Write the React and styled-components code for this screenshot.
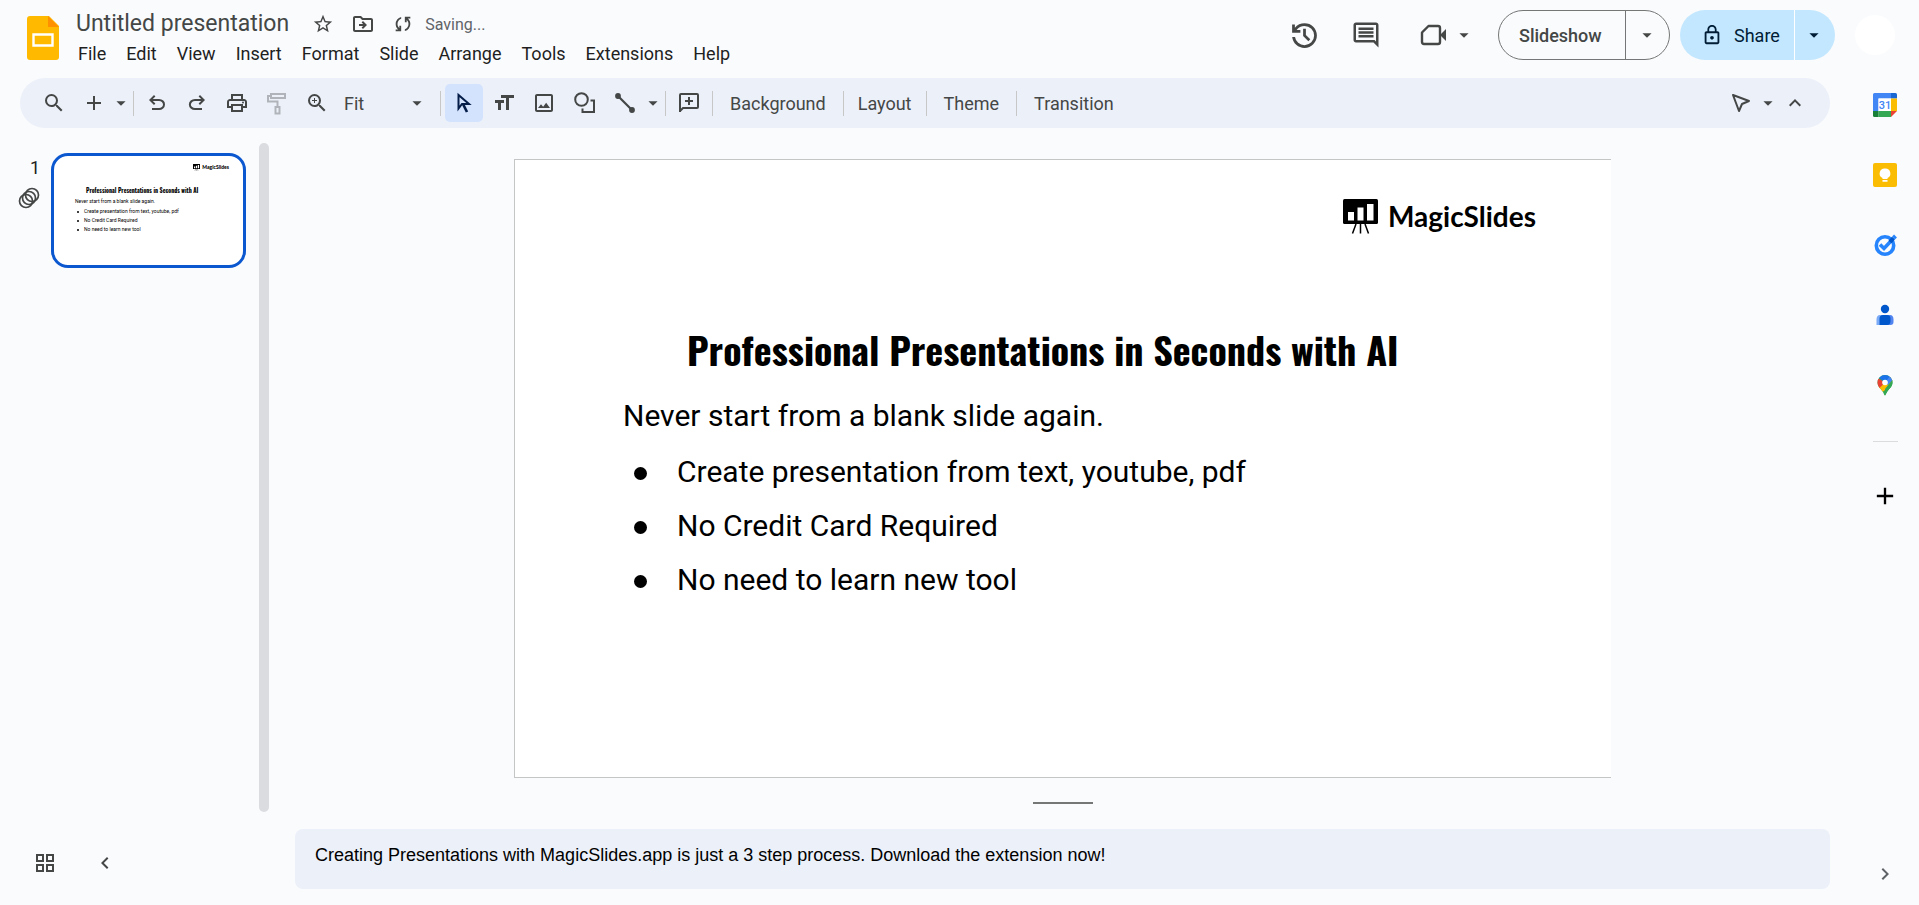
import styled, { createGlobalStyle } from "styled-components"
import {
  MdAdd,
  MdArrowDropDown,
  MdChevronLeft,
  MdChevronRight,
  MdFormatSize,
  MdKeyboardArrowUp,
  MdLockOutline,
  MdOutlineComment,
  MdOutlineDriveFileMove,
  MdOutlineGridView,
  MdOutlineImage,
  MdOutlinePrint,
  MdSearch,
  MdStarBorder,
  MdZoomIn,
} from "react-icons/md"

const GlobalStyle = createGlobalStyle`
    * {
        box-sizing: border-box;
    }
    body {
        margin: 0;
        background-color: #fafbfd;
        color: #1f1f1f;
        font-family: Roboto, "Liberation Sans", sans-serif;
    }
    button, select, textarea {
        font-family: inherit;
        color: inherit;
    }
    button {
        border: none;
        padding: 0;
        background: none;
        cursor: pointer;
    }
    svg {
        display: block;
        flex-shrink: 0;
    }
`

const Page = styled.div`
    display: flex;
    flex-direction: column;
    min-height: 100vh;
`

/* header */
const Header = styled.header`
    display: flex;
    justify-content: space-between;
    height: 78px;
    padding: 10px 24px 0 27px;
`
const HeaderLeft = styled.div`
    display: flex;
    gap: 9px;
`
const LogoLink = styled.a`
    padding-top: 6px;
`
const Titles = styled.div`
    display: flex;
    flex-direction: column;
`
const TitleRow = styled.div`
    display: flex;
    align-items: center;
    gap: 16px;
    height: 28px;
    padding-left: 8px;
    color: #444746;
`
const DocTitle = styled.h1`
    margin: 0 6px 0 0;
    font-size: 23px;
    font-weight: 400;
    line-height: 28px;
`
const SmallButton = styled.button`
    width: 24px;
    height: 24px;
    display: flex;
    align-items: center;
    justify-content: center;
`
const Status = styled.span`
    margin-left: -6px;
    font-size: 16px;
    color: #5f6368;
`
const Menu = styled.nav`
    display: flex;
    height: 30px;
`
const MenuItem = styled.button`
    padding: 0 10px;
    font-size: 18px;
    white-space: nowrap;
`
const HeaderRight = styled.div`
    display: flex;
    align-items: center;
    height: 50px;
    color: #444746;
`
const HeaderButton = styled.button`
    display: flex;
    align-items: center;
    justify-content: center;
    width: 61px;
    height: 50px;
`
const MeetButton = styled(HeaderButton)`
    width: 74px;
    margin: 0 14px;
    gap: 5px;
`
const Split = styled.div`
    display: flex;
    height: 50px;
    margin-right: 10px;
    overflow: hidden;
    border-radius: 25px;
    border: ${(props) => (props.$filled ? "none" : "1px solid #747775")};
    background-color: ${(props) => (props.$filled ? "#c2e7ff" : "transparent")};
    color: ${(props) => (props.$filled ? "#001d35" : "#444746")};
`
const SplitMain = styled.button`
    display: flex;
    align-items: center;
    gap: 11px;
    width: ${(props) => (props.$filled ? "114px" : "126px")};
    padding-left: ${(props) => (props.$filled ? "21px" : "20px")};
    font-size: 18px;
    font-weight: ${(props) => (props.$filled ? 400 : 500)};
`
const SplitArrow = styled.button`
    display: flex;
    align-items: center;
    justify-content: center;
    width: ${(props) => (props.$filled ? "41px" : "44px")};
    padding-right: 2px;
    border-left: 1px solid ${(props) => (props.$filled ? "#fff" : "#747775")};
`
const Avatar = styled.div`
    width: 40px;
    height: 40px;
    margin-left: 10px;
    border-radius: 50%;
    background-color: #fff;
`

/* body under the header */
const Body = styled.div`
    display: flex;
    flex: 1;
`
const Main = styled.main`
    display: flex;
    flex-direction: column;
    flex: 1;
    min-width: 0;
`
const Toolbar = styled.div`
    display: flex;
    align-items: center;
    height: 50px;
    margin: 0 21px 0 20px;
    padding: 0 16px 0 15px;
    border-radius: 25px;
    background-color: #ecf0f9;
    color: #444746;
`
const Tools = styled.div`
    display: flex;
    gap: 2px;
`
const ToolButton = styled.button`
    display: flex;
    align-items: center;
    justify-content: center;
    width: 38px;
    height: 38px;
    border-radius: 5px;
    color: ${(props) => (props.$active ? "#041e49" : "inherit")};
    background-color: ${(props) => (props.$active ? "#d3e3fd" : "transparent")};
    opacity: ${(props) => (props.disabled ? 0.35 : 1)};
`
const CaretButton = styled.button`
    display: flex;
    align-items: center;
    justify-content: center;
    width: 16px;
    height: 38px;
`
const Divider = styled.span`
    width: 1px;
    height: 25px;
    margin: 0 4px;
    background-color: #c7c7c7;
`
const ZoomBox = styled.label`
    display: flex;
    align-items: center;
    width: 98px;
    padding: 0 8px 0 6px;
`
const ZoomSelect = styled.select`
    flex: 1;
    appearance: none;
    border: none;
    padding: 0;
    background: none;
    font-size: 18px;
`
const TextButton = styled.button`
    height: 38px;
    padding: 0 ${(props) => (props.$tight ? "10px" : "13px")};
    font-size: 18px;
`
const Spacer = styled.div`
    flex: 1;
`

const Workspace = styled.div`
    display: flex;
    flex: 1;
`
const Filmstrip = styled.aside`
    display: flex;
    flex-direction: column;
    width: 295px;
    padding-top: 15px;
`
const FilmRow = styled.div`
    display: flex;
    flex: 1;
    justify-content: space-between;
    padding-right: 26px;
`
const FilmItem = styled.div`
    display: flex;
    padding-top: 10px;
`
const FilmInfo = styled.div`
    display: flex;
    flex-direction: column;
    align-items: flex-end;
    gap: 8px;
    width: 51px;
    padding: 4px 11px 0 0;
    font-size: 18px;
    line-height: 22px;
`
const Thumb = styled.button`
    display: flex;
    align-items: flex-start;
    width: 195px;
    height: 115px;
    border: 3px solid #0b57d0;
    border-radius: 17px;
    background-color: #fff;
    color: #000;
    overflow: hidden;
    text-align: left;
`
const ScrollThumb = styled.div`
    width: 10px;
    border-radius: 5px;
    background-color: #dadce0;
`
const FilmFooter = styled.div`
    display: flex;
    align-items: center;
    gap: 22px;
    height: 84px;
    margin-top: 9px;
    padding-left: 26px;
    color: #444746;
`

const Editor = styled.section`
    display: flex;
    flex-direction: column;
    flex: 1;
    padding: 31px 21px 16px 0;
`
const Stage = styled.div`
    display: flex;
    justify-content: center;
    flex: 1;
`
const Slide = styled.div`
    aspect-ratio: 1097 / 619;
    border: 1px solid #c4c6c5;
    border-right: none;
    background-color: #fff;
    color: #000;
`
const SlideInner = styled.div`
    display: flex;
    flex-direction: column;
    width: 100%;
    padding: ${(props) => (props.$mini ? "8px 14px 0 21px" : "39px 75px 0 108px")};
`
const Brand = styled.div`
    display: flex;
    align-self: flex-end;
    align-items: flex-start;
    gap: ${(props) => (props.$mini ? "2px" : "10px")};
    font-family: Lato, sans-serif;
    font-weight: ${(props) => (props.$mini ? 900 : 700)};
    font-size: ${(props) => (props.$mini ? "5px" : "28px")};
    line-height: ${(props) => (props.$mini ? "7px" : "34px")};
`
const Headline = styled.h2`
    margin: ${(props) => (props.$mini ? "15px 0 0 11px" : "91px 0 0 64px")};
    font-family: Oswald, "Roboto Condensed", "Liberation Sans Narrow", sans-serif;
    font-weight: 700;
    font-size: ${(props) => (props.$mini ? "6px" : "38px")};
    line-height: ${(props) => (props.$mini ? "10px" : "48px")};
    white-space: nowrap;
`
const Lead = styled.p`
    margin: ${(props) => (props.$mini ? "2px 0" : "16px 0 2px")};
    font-size: ${(props) => (props.$mini ? "5px" : "30px")};
    line-height: ${(props) => (props.$mini ? "7px" : "54px")};
`
const Bullets = styled.ul`
    margin: 0;
    padding: 0;
    list-style: none;
    font-size: ${(props) => (props.$mini ? "5px" : "30px")};
    line-height: ${(props) => (props.$mini ? "9px" : "54px")};
`
const Bullet = styled.li`
    display: flex;
    align-items: center;

    &::before {
        content: "";
        width: ${(props) => (props.$mini ? "2px" : "13px")};
        height: ${(props) => (props.$mini ? "2px" : "13px")};
        margin: ${(props) => (props.$mini ? "0 5px 0 2px" : "2px 30px 0 11px")};
        border-radius: 50%;
        background-color: #000;
    }
`
const ResizeHandle = styled.div`
    width: 60px;
    height: 2px;
    margin: 24px auto 25px;
    background-color: #747775;
`
const Notes = styled.textarea`
    display: block;
    width: 100%;
    height: 60px;
    padding: 15px 20px;
    border: none;
    border-radius: 8px;
    outline: none;
    resize: none;
    background-color: #ecf0f9;
    color: #000;
    font-family: "Liberation Sans", Arial, sans-serif;
    font-size: 18px;
    line-height: 23px;
`

/* right panel */
const SidePanel = styled.aside`
    display: flex;
    flex-direction: column;
    align-items: center;
    width: 68px;
    padding: 12px 0 19px;
`
const SideButton = styled.button`
    display: flex;
    align-items: center;
    justify-content: center;
    width: 30px;
    height: 30px;
    margin: 0 0 40px;
`
const SideLine = styled.span`
    width: 25px;
    height: 1px;
    margin: 1px 0 39px;
    background-color: #dadce0;
`
const PanelToggle = styled.button`
    color: #5f6368;
`

const Symbol = ({ d, size = 24 }) => (
  <svg width={size} height={size} viewBox="0 -960 960 960" fill="currentColor">
    <path d={d} />
  </svg>
)

const SYNC = "M160-160v-80h110l-16-14q-52-46-73-105t-21-119q0-111 66.5-197.5T400-790v84q-72 26-116 88.5T240-478q0 45 17 87.5t53 78.5l10 10v-98h80v240H160Zm400-10v-84q72-26 116-88.5T720-482q0-45-17-87.5T650-648l-10-10v98h-80v-240h240v80H690l16 14q49 49 71.5 106.5T800-482q0 111-66.5 197.5T560-170Z"
const UNDO = "M280-200v-80h284q63 0 109.5-40T720-420q0-60-46.5-100T564-560H312l104 104-56 56-200-200 200-200 56 56-104 104h252q97 0 169.5 63T800-420q0 94-72.5 157T564-200H280Z"
const REDO = "M396-200q-97 0-169.5-63T154-420q0-94 72.5-157T396-640h252L544-744l56-56 200 200-200 200-56-56 104-104H396q-63 0-109.5 40T234-420q0 60 52.5 100T396-280h284v80H396Z"
const HISTORY = "M480-120q-138 0-240.5-91.5T122-440h82q14 104 92.5 172T480-200q117 0 198.5-81.5T760-480q0-117-81.5-198.5T480-760q-69 0-129 32t-101 88h110v80H120v-240h80v94q51-64 124.5-99T480-840q75 0 140.5 28.5t114 77q48.5 48.5 77 114T840-480q0 75-28.5 140.5t-77 114q-48.5 48.5-114 77T480-120Zm112-192L440-464v-216h80v184l128 128-56 56Z"

const Caret = () => <MdArrowDropDown size={22} />

const SlidesLogo = () => (
  <svg width="32" height="44" viewBox="0 0 32 44">
    <path d="M3 0h19l10 10v31a3 3 0 0 1-3 3H3a3 3 0 0 1-3-3V3a3 3 0 0 1 3-3z" fill="#ffba00" />
    <path d="M21 0l11 11H21z" fill="#ff9100" />
    <path d="M6.5 18.5h19v11h-19z" fill="none" stroke="#fff" strokeWidth="2.4" />
  </svg>
)

const PaintRoller = () => (
  <svg width="24" height="24" viewBox="0 0 24 24" fill="none" stroke="currentColor" strokeWidth="2">
    <path d="M6 3h14v4H6zM6 5H3v5.5h9.5V16" />
    <path d="M10.5 16h4v6.5h-4z" />
  </svg>
)

const Cursor = () => (
  <svg width="24" height="26" viewBox="0 0 24 26" fill="none" stroke="currentColor" strokeWidth="2">
    <path d="M6.5 5v13.5l3.5-4.5h7z" />
    <path d="M11 14l4 8" strokeWidth="2.6" />
  </svg>
)

const Shapes = () => (
  <svg width="24" height="24" viewBox="0 0 24 24" fill="none" stroke="currentColor" strokeWidth="2">
    <circle cx="9.5" cy="8.5" r="6.3" />
    <path d="M18.5 9.5H22V21H10.5v-3.5" />
  </svg>
)

const Line = () => (
  <svg width="24" height="24" viewBox="0 0 24 24" stroke="currentColor" strokeWidth="2.2" fill="currentColor">
    <path d="M6 5l14 14" />
    <circle cx="6" cy="5" r="1.8" />
    <circle cx="20" cy="19" r="1.8" />
  </svg>
)

const AddComment = () => (
  <svg width="24" height="24" viewBox="0 0 24 24" fill="none" stroke="currentColor" strokeWidth="2">
    <path d="M3 21V4q0-1 1-1h16q1 0 1 1v12q0 1-1 1H6l-3 3z" />
    <path d="M12 6v8M8 10h8" />
  </svg>
)

const Meet = () => (
  <svg width="28" height="28" viewBox="0 0 28 28" fill="none" stroke="currentColor" strokeWidth="2.4">
    <path d="M8.5 5H18q2 0 2 2v14q0 2-2 2H4q-2 0-2-2v-9.5z" strokeLinejoin="round" />
    <path d="M20 14l6-6v12l-6-6z" fill="currentColor" stroke="none" />
  </svg>
)

const Pointer = () => (
  <svg width="24" height="24" viewBox="0 0 24 24" fill="none" stroke="currentColor" strokeWidth="2">
    <path d="M4 4l16 6-7 3-3 7z" strokeLinejoin="round" />
  </svg>
)

const Motion = () => (
  <svg width="22" height="22" viewBox="0 0 22 22" fill="none" stroke="#444746" strokeWidth="1.7">
    <circle cx="14" cy="8" r="6.5" />
    <circle cx="11" cy="11" r="6.5" />
    <circle cx="8" cy="14" r="6.5" />
  </svg>
)

const Easel = ({ width, height }) => (
  <svg width={width} height={height} viewBox="0 0 35 35">
    <rect width="35" height="25" rx="1.5" fill="#000" />
    <path d="M5 13h6v8.500H5zM14.500 8.500h6v13h-6zM24 5h6.500v16.500H24z" fill="#fff" />
    <path d="M13 25l-3.500 9.500M17.500 25v9.500M22 25l3.500 9.500" stroke="#000" strokeWidth="1.5" />
  </svg>
)

const Calendar = () => (
  <svg width="24" height="24" viewBox="0 0 24 24">
    <path d="M1.5 0H18v5.5H5.5V18H0V1.5Q0 0 1.5 0z" fill="#4285f4" />
    <path d="M18 0h4.5Q24 0 24 1.5V5.5h-6z" fill="#1967d2" />
    <path d="M18 5.5h6V18h-6z" fill="#fbbc04" />
    <path d="M5.5 18H18v6H5.5z" fill="#34a853" />
    <path d="M0 18h5.5v6h-4Q0 24 0 22.5z" fill="#188038" />
    <path d="M18 18h6l-6 6z" fill="#ea4335" />
    <path d="M5.5 5.5H18V18H5.5z" fill="#fff" />
    <text x="12" y="16" textAnchor="middle" fontSize="11" fontWeight="500" fill="#4285f4">31</text>
  </svg>
)

const Keep = () => (
  <svg width="24" height="24" viewBox="0 0 24 24">
    <rect width="24" height="24" rx="2" fill="#fbbc04" />
    <path d="M12 5.5a5 5 0 0 0-2.5 9.5v1h5v-1A5 5 0 0 0 12 5.5zM9.5 17h5v1.8h-5z" fill="#fff" />
  </svg>
)

const Tasks = () => (
  <svg width="24" height="24" viewBox="0 0 24 24" fill="none">
    <circle cx="12" cy="12.5" r="8.7" stroke="#2684fc" strokeWidth="3.6" />
    <path d="M7 11.5l4 4 7-7.5" stroke="#2684fc" strokeWidth="3.6" />
    <path d="M17 9l3.5-4" stroke="#0057cc" strokeWidth="4" />
    <path d="M20.5 5l2-2" stroke="#2684fc" strokeWidth="4" />
  </svg>
)

const Contacts = () => (
  <svg width="24" height="24" viewBox="0 0 24 24">
    <circle cx="12" cy="6" r="4.2" fill="#0057cc" />
    <path d="M7 12h4v10H3.5v-5.5Q3.5 12 7 12z" fill="#7baaf7" />
    <path d="M13 12h4q3.5 0 3.5 4.5V19q0 3-3 3H13z" fill="#5285f0" />
    <path d="M10 12h4q3.5 0 3.5 3.5V18q0 4-3.5 4H6.5v-6.5Q6.5 12 10 12z" fill="#0057cc" />
  </svg>
)

const Maps = () => (
  <svg width="24" height="24" viewBox="0 0 24 24">
    <clipPath id="pin">
      <path d="M12 2a7.5 7.5 0 0 0-7.5 7.5c0 4.5 4 6.5 6 10.5 .5 1.2 .8 2.5 1.5 2.5s1-1.3 1.5-2.5c2-4 6-6 6-10.5A7.5 7.5 0 0 0 12 2z" />
    </clipPath>
    <g clipPath="url(#pin)">
      <path d="M0 0h24v24H0z" fill="#34a853" />
      <path d="M12 9.5L18 2h2v6l-9 10-7 3V15z" fill="#fbbc04" />
      <path d="M3 4l9 5.5L5.5 16 3 12z" fill="#ea4335" />
      <path d="M12 9.5L5 4l4-4h8l3 6z" fill="#1a73e8" />
      <path d="M12 9.5L17 3l3 4-5 5z" fill="#4285f4" />
      <path d="M20 6v14h-8v-4z" fill="#34a853" />
    </g>
    <circle cx="12" cy="9.5" r="2.8" fill="#fff" />
  </svg>
)

const menus = ["File", "Edit", "View", "Insert", "Format", "Slide", "Arrange", "Tools", "Extensions", "Help"]

const points = ["Create presentation from text, youtube, pdf", "No Credit Card Required", "No need to learn new tool"]

const apps = [
  { name: "Calendar", icon: <Calendar /> },
  { name: "Keep", icon: <Keep /> },
  { name: "Tasks", icon: <Tasks /> },
  { name: "Contacts", icon: <Contacts /> },
  { name: "Maps", icon: <Maps /> },
]

const SlideContent = ({ mini }) => (
  <SlideInner $mini={mini}>
    <Brand $mini={mini}>
      <Easel width={mini ? 7 : 35} height={mini ? 7 : 35} />
      MagicSlides
    </Brand>
    <Headline $mini={mini}>Professional Presentations in Seconds with AI</Headline>
    <Lead $mini={mini}>Never start from a blank slide again.</Lead>
    <Bullets $mini={mini}>
      {points.map((point) => (
        <Bullet key={point} $mini={mini}>{point}</Bullet>
      ))}
    </Bullets>
  </SlideInner>
)

const App = () => {
  return (
    <Page>
      <GlobalStyle />
      <Header>
        <HeaderLeft>
          <LogoLink href="#" aria-label="Slides home">
            <SlidesLogo />
          </LogoLink>
          <Titles>
            <TitleRow>
              <DocTitle>Untitled presentation</DocTitle>
              <SmallButton aria-label="Star"><MdStarBorder size={22} /></SmallButton>
              <SmallButton aria-label="Move"><MdOutlineDriveFileMove size={24} /></SmallButton>
              <SmallButton aria-label="Sync status"><Symbol d={SYNC} size={22} /></SmallButton>
              <Status>Saving...</Status>
            </TitleRow>
            <Menu>
              {menus.map((name) => (
                <MenuItem key={name}>{name}</MenuItem>
              ))}
            </Menu>
          </Titles>
        </HeaderLeft>
        <HeaderRight>
          <HeaderButton aria-label="Version history"><Symbol d={HISTORY} size={33} /></HeaderButton>
          <HeaderButton aria-label="Comments"><MdOutlineComment size={30} /></HeaderButton>
          <MeetButton aria-label="Join a call"><Meet /><Caret /></MeetButton>
          <Split>
            <SplitMain>Slideshow</SplitMain>
            <SplitArrow aria-label="Slideshow options"><Caret /></SplitArrow>
          </Split>
          <Split $filled>
            <SplitMain $filled><MdLockOutline size={22} />Share</SplitMain>
            <SplitArrow $filled aria-label="Share options"><Caret /></SplitArrow>
          </Split>
          <Avatar />
        </HeaderRight>
      </Header>
      <Body>
        <Main>
          <Toolbar>
            <Tools>
              <ToolButton aria-label="Search"><MdSearch size={24} /></ToolButton>
              <ToolButton aria-label="New slide"><MdAdd size={24} /></ToolButton>
            </Tools>
            <CaretButton aria-label="New slide layout"><Caret /></CaretButton>
            <Divider />
            <Tools>
              <ToolButton aria-label="Undo"><Symbol d={UNDO} size={24} /></ToolButton>
              <ToolButton aria-label="Redo"><Symbol d={REDO} size={24} /></ToolButton>
              <ToolButton aria-label="Print"><MdOutlinePrint size={24} /></ToolButton>
              <ToolButton aria-label="Paint format" disabled><PaintRoller /></ToolButton>
              <ToolButton aria-label="Zoom"><MdZoomIn size={24} /></ToolButton>
              <ZoomBox>
                <ZoomSelect aria-label="Zoom level">
                  <option>Fit</option>
                </ZoomSelect>
                <Caret />
              </ZoomBox>
            </Tools>
            <Divider />
            <Tools>
              <ToolButton aria-label="Select" $active><Cursor /></ToolButton>
              <ToolButton aria-label="Text box"><MdFormatSize size={24} /></ToolButton>
              <ToolButton aria-label="Image"><MdOutlineImage size={24} /></ToolButton>
              <ToolButton aria-label="Shape"><Shapes /></ToolButton>
              <ToolButton aria-label="Line"><Line /></ToolButton>
              <CaretButton aria-label="Line options"><Caret /></CaretButton>
            </Tools>
            <Divider />
            <ToolButton aria-label="Add comment"><AddComment /></ToolButton>
            <Divider />
            <TextButton>Background</TextButton>
            <Divider />
            <TextButton $tight>Layout</TextButton>
            <Divider />
            <TextButton>Theme</TextButton>
            <Divider />
            <TextButton>Transition</TextButton>
            <Spacer />
            <ToolButton aria-label="Pointer"><Pointer /></ToolButton>
            <CaretButton aria-label="Pointer options"><Caret /></CaretButton>
            <ToolButton aria-label="Hide the menus"><MdKeyboardArrowUp size={24} /></ToolButton>
          </Toolbar>
          <Workspace>
            <Filmstrip>
              <FilmRow>
                <FilmItem>
                  <FilmInfo>
                    1
                    <Motion />
                  </FilmInfo>
                  <Thumb aria-label="Slide 1"><SlideContent mini /></Thumb>
                </FilmItem>
                <ScrollThumb />
              </FilmRow>
              <FilmFooter>
                <ToolButton aria-label="Grid view"><MdOutlineGridView size={24} /></ToolButton>
                <ToolButton aria-label="Hide filmstrip"><MdChevronLeft size={24} /></ToolButton>
              </FilmFooter>
            </Filmstrip>
            <Editor>
              <Stage>
                <Slide><SlideContent /></Slide>
              </Stage>
              <ResizeHandle />
              <Notes
                aria-label="Speaker notes"
                defaultValue="Creating Presentations with MagicSlides.app is just a 3 step process. Download the extension now!"
              />
            </Editor>
          </Workspace>
        </Main>
        <SidePanel>
          {apps.map((app) => (
            <SideButton key={app.name} aria-label={app.name}>{app.icon}</SideButton>
          ))}
          <SideLine />
          <SideButton aria-label="Get add-ons"><MdAdd size={28} color="#000" /></SideButton>
          <Spacer />
          <PanelToggle aria-label="Hide side panel"><MdChevronRight size={24} /></PanelToggle>
        </SidePanel>
      </Body>
    </Page>
  )
}

export default App
